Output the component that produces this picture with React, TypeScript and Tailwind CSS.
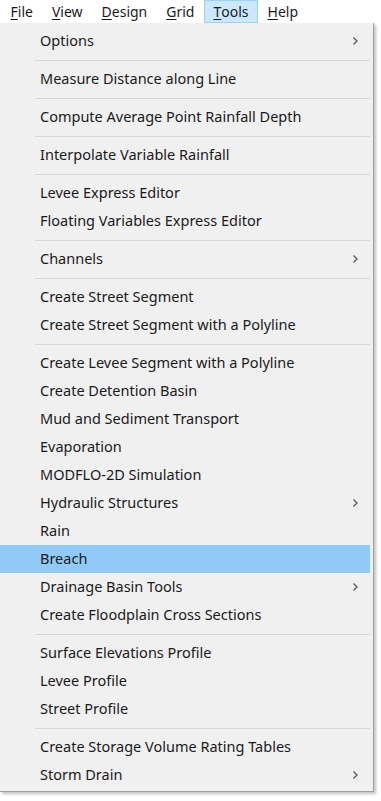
import React from 'react';

type Entry = { label: string; sub?: boolean; active?: boolean } | 'sep';

const menuBar = [
    { key: 'F', rest: 'ile' },
    { key: 'V', rest: 'iew' },
    { key: 'D', rest: 'esign' },
    { key: 'G', rest: 'rid' },
    { key: 'T', rest: 'ools', open: true },
    { key: 'H', rest: 'elp' },
];

const entries: Entry[] = [
    { label: 'Options', sub: true },
    'sep',
    { label: 'Measure Distance along Line' },
    'sep',
    { label: 'Compute Average Point Rainfall Depth' },
    'sep',
    { label: 'Interpolate Variable Rainfall' },
    'sep',
    { label: 'Levee Express Editor' },
    { label: 'Floating Variables Express Editor' },
    'sep',
    { label: 'Channels', sub: true },
    'sep',
    { label: 'Create Street Segment' },
    { label: 'Create Street Segment with a Polyline' },
    'sep',
    { label: 'Create Levee Segment with a Polyline' },
    { label: 'Create Detention Basin' },
    { label: 'Mud and Sediment Transport' },
    { label: 'Evaporation' },
    { label: 'MODFLO-2D Simulation' },
    { label: 'Hydraulic Structures', sub: true },
    { label: 'Rain' },
    { label: 'Breach', active: true },
    { label: 'Drainage Basin Tools', sub: true },
    { label: 'Create Floodplain Cross Sections' },
    'sep',
    { label: 'Surface Elevations Profile' },
    { label: 'Levee Profile' },
    { label: 'Street Profile' },
    'sep',
    { label: 'Create Storage Volume Rating Tables' },
    { label: 'Storm Drain', sub: true },
];

function Chevron() {
    return (
        <svg width="7" height="10" viewBox="0 0 7 10" className="text-[#505050]">
            <path d="M1.5 1.5 L5 5 L1.5 8.5" fill="none" stroke="currentColor" strokeWidth="1.2" />
        </svg>
    );
}

export default function App() {
    return (
        <div className="w-[381px] h-[801px] bg-white overflow-hidden text-[#1a1a1a] font-['Noto_Sans','Open_Sans',sans-serif]">
            {/* Menu bar */}
            <div className="flex h-[23px] items-stretch pl-[1px] text-[14px] leading-none">
                {menuBar.map((m) => (
                    <div
                        key={m.key}
                        className={`flex items-center px-[8.5px] border ${
                            m.open ? 'bg-[#cce8ff] border-[#99d1ff]' : 'border-transparent'
                        }`}
                    >
                        <span className="underline underline-offset-2">{m.key}</span>
                        {m.rest}
                    </div>
                ))}
            </div>

            {/* Dropdown */}
            <div className="w-[374px] h-[769px] bg-[#f0f0f0] border-r border-b border-[#a0a0a0] shadow-[2px_2px_3px_rgba(0,0,0,0.25)] pt-[4px] pr-[3px]">
                {entries.map((e, i) =>
                    e === 'sep' ? (
                        <div key={i} className="h-[10px] flex items-center pl-[35px]">
                            <div className="h-px w-full bg-[#d7d7d7]" />
                        </div>
                    ) : (
                        <div
                            key={i}
                            className={`h-[28px] flex items-center justify-between pl-[40px] pr-[11px] text-[14.5px] ${
                                e.active ? 'bg-[#91c9f7]' : ''
                            }`}
                        >
                            <span>{e.label}</span>
                            {e.sub && <Chevron />}
                        </div>
                    )
                )}
            </div>
        </div>
    );
}
